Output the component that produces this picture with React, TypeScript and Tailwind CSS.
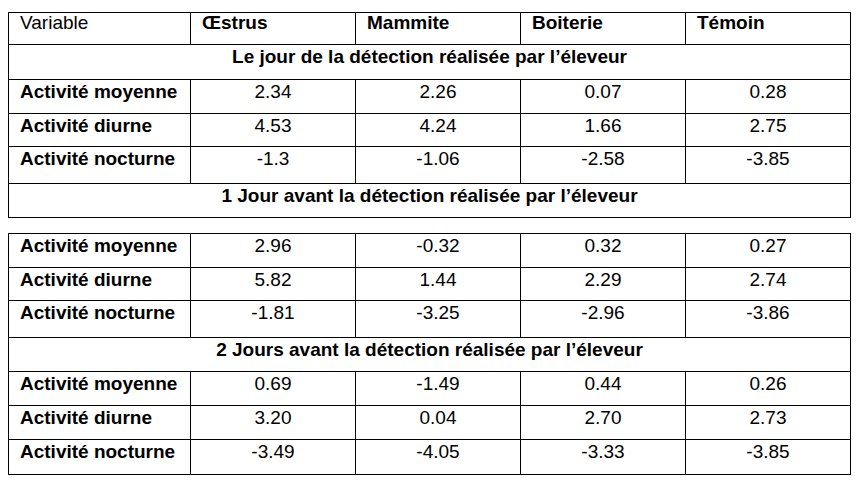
const COLUMNS = ["Œstrus", "Mammite", "Boiterie", "Témoin"];

type Row = { label: string; values: string[]; h: string };

const dayOf: Row[] = [
  { label: "Activité moyenne", values: ["2.34", "2.26", "0.07", "0.28"], h: "h-[34px]" },
  { label: "Activité diurne", values: ["4.53", "4.24", "1.66", "2.75"], h: "h-[33px]" },
  { label: "Activité nocturne", values: ["-1.3", "-1.06", "-2.58", "-3.85"], h: "h-[37px]" },
];

const oneDay: Row[] = [
  { label: "Activité moyenne", values: ["2.96", "-0.32", "0.32", "0.27"], h: "h-[34px]" },
  { label: "Activité diurne", values: ["5.82", "1.44", "2.29", "2.74"], h: "h-[33px]" },
  { label: "Activité nocturne", values: ["-1.81", "-3.25", "-2.96", "-3.86"], h: "h-[37px]" },
];

const twoDays: Row[] = [
  { label: "Activité moyenne", values: ["0.69", "-1.49", "0.44", "0.26"], h: "h-[34px]" },
  { label: "Activité diurne", values: ["3.20", "0.04", "2.70", "2.73"], h: "h-[34px]" },
  { label: "Activité nocturne", values: ["-3.49", "-4.05", "-3.33", "-3.85"], h: "h-[35px]" },
];

const cell = "border border-black align-top pt-[1px] leading-[22px]";
const headCell = "border border-black align-top pt-0 leading-[20px] pl-[11px]";

function Cols() {
  return (
    <colgroup>
      <col className="w-[182px]" />
      <col className="w-[165px]" />
      <col className="w-[165px]" />
      <col className="w-[165px]" />
      <col className="w-[165px]" />
    </colgroup>
  );
}

function DataRows({ rows }: { rows: Row[] }) {
  return (
    <>
      {rows.map((row) => (
        <tr key={row.label} className={row.h}>
          <td className={`${cell} pl-[11px] font-bold`}>{row.label}</td>
          {row.values.map((v, i) => (
            <td key={i} className={`${cell} text-center`}>
              {v}
            </td>
          ))}
        </tr>
      ))}
    </>
  );
}

function GroupRow({ title, h }: { title: string; h: string }) {
  return (
    <tr className={h}>
      <td colSpan={5} className={`${cell} text-center font-bold`}>
        {title}
      </td>
    </tr>
  );
}

export default function App() {
  return (
    <div
      className="min-h-screen bg-white pl-[8px] pt-[12px] text-[19px] text-black"
      style={{ fontFamily: '"Liberation Sans", Arial, sans-serif' }}
    >
      <table className="w-[842px] table-fixed border-collapse">
        <Cols />
        <tbody>
          <tr className="h-[32px]">
            <td className={headCell}>Variable</td>
            {COLUMNS.map((c) => (
              <td key={c} className={`${headCell} font-bold`}>
                {c}
              </td>
            ))}
          </tr>
          <GroupRow title="Le jour de la détection réalisée par l’éleveur" h="h-[35px]" />
          <DataRows rows={dayOf} />
          <GroupRow title="1 Jour avant la détection réalisée par l’éleveur" h="h-[34px]" />
        </tbody>
      </table>

      <table className="mt-[15px] w-[842px] table-fixed border-collapse">
        <Cols />
        <tbody>
          <DataRows rows={oneDay} />
          <GroupRow title="2 Jours avant la détection réalisée par l’éleveur" h="h-[34px]" />
          <DataRows rows={twoDays} />
        </tbody>
      </table>
    </div>
  );
}
